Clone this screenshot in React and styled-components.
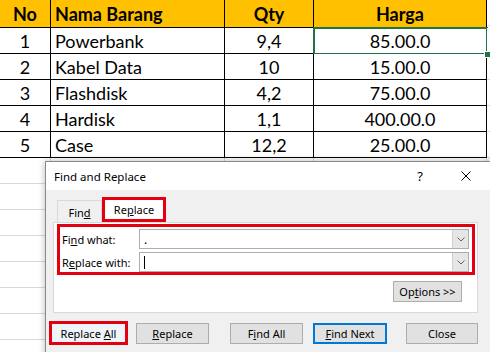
import React from 'react';
import styled, { createGlobalStyle } from 'styled-components';

const Global = createGlobalStyle`
  html, body { margin: 0; padding: 0; background: #fff; }
  body { width: 490px; height: 352px; overflow: hidden; }
`;

const Screen = styled.div`
  position: relative;
  width: 490px;
  height: 352px;
  overflow: hidden;
  background: #fff;
`;

const Sheet = styled.div`
  display: grid;
  grid-template-columns: 51px 174px 89px 173px 3px;
  font-family: Lato, "Liberation Sans", sans-serif;
  font-size: 18px;
  color: #000;
`;

const Cell = styled.div`
  position: relative;
  box-sizing: border-box;
  height: ${p => (p.$header ? 28 : 26)}px;
  display: flex;
  align-items: center;
  justify-content: ${p => (p.$align === 'left' ? 'flex-start' : 'center')};
  padding-left: ${p => (p.$align === 'left' ? 4 : 0)}px;
  background: ${p => (p.$header ? '#FFC000' : '#fff')};
  font-weight: ${p => (p.$header ? 700 : 400)};
  border-right: 1px solid ${p => (p.$blank ? '#D9D9D9' : '#000')};
  border-bottom: 1px solid ${p => (p.$blank ? '#D9D9D9' : '#000')};
  ${p => p.$edge && 'border-right: none;'}
  ${p =>
    p.$active &&
    `
    &::after {
      content: '';
      position: absolute;
      top: -1px; left: -1px; right: -2px; bottom: -2px;
      border: 2px solid #217346;
    }
    &::before {
      content: '';
      position: absolute;
      right: -5px; bottom: -5px;
      width: 5px; height: 5px;
      background: #217346;
      border: 1px solid #fff;
      z-index: 1;
    }
  `}
`;

const Dialog = styled.div`
  position: absolute;
  left: 45px;
  top: 161px;
  width: 450px;
  height: 200px;
  background: #F0F0F0;
  border: 1px solid #8A8A8A;
  box-shadow: 0 0 7px rgba(0, 0, 0, 0.28);
  font-family: "Noto Sans", "Liberation Sans", sans-serif;
  font-size: 11px;
  color: #000;
  display: flex;
  flex-direction: column;
`;

const TitleBar = styled.div`
  height: 28px;
  background: #fff;
  display: flex;
  align-items: center;
  padding: 0 7px 0 8px;
  font-size: 11.5px;
`;

const TitleText = styled.div`
  flex: 1;
`;

const TitleBtn = styled.div`
  width: 46px;
  height: 28px;
  display: flex;
  align-items: center;
  justify-content: center;
  font-size: 13px;
`;

const Body = styled.div`
  padding: 7px 0 0 7px;
  display: flex;
  flex-direction: column;
`;

const Tabs = styled.div`
  display: flex;
  align-items: flex-end;
  height: 25px;
  padding-left: 4px;
`;

const Tab = styled.div`
  box-sizing: border-box;
  width: ${p => p.$w}px;
  height: ${p => (p.$selected ? 25 : 22)}px;
  display: flex;
  align-items: center;
  justify-content: center;
  background: ${p => (p.$selected ? '#fff' : '#F0F0F0')};
  border: ${p => (p.$selected ? '3px solid #E3000F' : '1px solid #D9D9D9')};
  ${p => !p.$selected && 'border-bottom: none; padding-top: 1px;'}
`;

const Panel = styled.div`
  box-sizing: border-box;
  width: 425px;
  height: 91px;
  background: #fff;
  border: 1px solid #D9D9D9;
  padding: 1px 2px 0 3px;
  display: flex;
  flex-direction: column;
`;

const Highlight = styled.div`
  box-sizing: border-box;
  width: 418px;
  height: 51px;
  border: 3px solid #E3000F;
  padding: 2px 3px 0 2px;
  display: grid;
  grid-template-columns: 77px 1fr;
  grid-auto-rows: 20px;
  row-gap: 3px;
  align-items: center;
`;

const Label = styled.div`
  white-space: nowrap;
`;

const Combo = styled.div`
  box-sizing: border-box;
  height: 20px;
  border: 1px solid #ABADB3;
  background: #fff;
  display: flex;
  align-items: stretch;
`;

const ComboText = styled.div`
  flex: 1;
  display: flex;
  align-items: center;
  padding-left: 4px;
  font-size: 12px;
`;

const Caret = styled.div`
  width: 1px;
  height: 13px;
  background: #000;
`;

const ComboArrow = styled.div`
  width: 15px;
  background: #E6E6E6;
  border-left: 1px solid #D0D0D0;
  display: flex;
  align-items: center;
  justify-content: center;
`;

const OptionsRow = styled.div`
  display: flex;
  justify-content: flex-end;
  padding-right: 13px;
  margin-top: 6px;
`;

const Button = styled.div`
  box-sizing: border-box;
  width: ${p => p.$w}px;
  height: ${p => (p.$marked ? 24 : 21)}px;
  margin-left: ${p => p.$ml || 0}px;
  display: flex;
  align-items: center;
  justify-content: center;
  background: ${p => (p.$marked ? '#EEF4FA' : '#E1E1E1')};
  border: ${p =>
    p.$marked ? '3px solid #E3000F' : p.$default ? '2px solid #0078D7' : '1px solid #ADADAD'};
  white-space: pre;
`;

const ButtonRow = styled.div`
  display: flex;
  align-items: center;
  height: 24px;
  margin-top: 8px;
  margin-left: -4px;
`;

const Chevron = () => (
  <svg width="8" height="5" viewBox="0 0 8 5">
    <polyline points="0.5,0.5 4,4 7.5,0.5" fill="none" stroke="#606060" strokeWidth="1" />
  </svg>
);

const CloseX = () => (
  <svg width="10" height="10" viewBox="0 0 10 10">
    <path d="M0.5 0.5 L9.5 9.5 M9.5 0.5 L0.5 9.5" stroke="#000" strokeWidth="1" />
  </svg>
);

const rows = [
  ['1', 'Powerbank', '9,4', '85.00.0'],
  ['2', 'Kabel Data', '10', '15.00.0'],
  ['3', 'Flashdisk', '4,2', '75.00.0'],
  ['4', 'Hardisk', '1,1', '400.00.0'],
  ['5', 'Case', '12,2', '25.00.0'],
];

export default function App() {
  return (
    <Screen>
      <Global />
      <Sheet>
        <Cell $header>No</Cell>
        <Cell $header $align="left">Nama Barang</Cell>
        <Cell $header>Qty</Cell>
        <Cell $header>Harga</Cell>
        <Cell $blank $edge />
        {rows.map((r, i) => (
          <React.Fragment key={r[0]}>
            <Cell>{r[0]}</Cell>
            <Cell $align="left">{r[1]}</Cell>
            <Cell>{r[2]}</Cell>
            <Cell $active={i === 0}>{r[3]}</Cell>
            <Cell $blank $edge />
          </React.Fragment>
        ))}
        {Array.from({ length: 8 }).map((_, i) => (
          <React.Fragment key={'b' + i}>
            <Cell $blank />
            <Cell $blank />
            <Cell $blank />
            <Cell $blank />
            <Cell $blank $edge />
          </React.Fragment>
        ))}
      </Sheet>

      <Dialog>
        <TitleBar>
          <TitleText>Find and Replace</TitleText>
          <TitleBtn>?</TitleBtn>
          <TitleBtn>
            <CloseX />
          </TitleBtn>
        </TitleBar>
        <Body>
          <Tabs>
            <Tab $w={45}>
              <span>Fin<u>d</u></span>
            </Tab>
            <Tab $w={64} $selected>
              <span>Re<u>p</u>lace</span>
            </Tab>
          </Tabs>
          <Panel>
            <Highlight>
              <Label>
                Fi<u>n</u>d what:
              </Label>
              <Combo>
                <ComboText>.</ComboText>
                <ComboArrow>
                  <Chevron />
                </ComboArrow>
              </Combo>
              <Label>
                R<u>e</u>place with:
              </Label>
              <Combo>
                <ComboText>
                  <Caret />
                </ComboText>
                <ComboArrow>
                  <Chevron />
                </ComboArrow>
              </Combo>
            </Highlight>
            <OptionsRow>
              <Button $w={69}>
                <span>Op<u>t</u>ions &gt;&gt;</span>
              </Button>
            </OptionsRow>
          </Panel>
          <ButtonRow>
            <Button $w={79} $marked>
              <span>Replace <u>A</u>ll</span>
            </Button>
            <Button $w={73} $ml={8}>
              <span><u>R</u>eplace</span>
            </Button>
            <Button $w={73} $ml={21}>
              <span>F<u>i</u>nd All</span>
            </Button>
            <Button $w={74} $ml={10} $default>
              <span><u>F</u>ind Next</span>
            </Button>
            <Button $w={72} $ml={19}>
              <span>Close</span>
            </Button>
          </ButtonRow>
        </Body>
      </Dialog>
    </Screen>
  );
}
